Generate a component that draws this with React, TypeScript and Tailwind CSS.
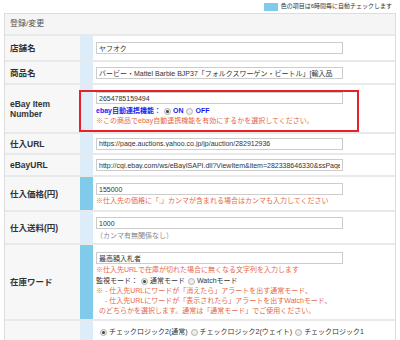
const font = "font-['Liberation_Sans','Noto_Sans_CJK_JP',sans-serif]"

const Field = ({ value }: { value: string }) => (
  <input
    readOnly
    value={value}
    className="block h-[12px] w-[247px] border border-[#cccccc] bg-white px-[2px] text-[7px] leading-[10px] text-[#333] outline-none"
  />
)

const Radio = ({ checked }: { checked?: boolean }) => (
  <span className="mr-[2px] inline-flex h-[7px] w-[7px] shrink-0 items-center justify-center rounded-full border border-[#b0b0b0] bg-[#ececec]">
    {checked && <span className="h-[3px] w-[3px] rounded-full bg-[#444]" />}
  </span>
)

const Row = ({
  label,
  checked,
  h,
  children,
  top,
}: {
  label?: React.ReactNode
  checked?: boolean
  h: string
  children?: React.ReactNode
  top?: boolean
}) => (
  <div className={`relative flex border-b-2 border-[#e9e9e9] ${h}`}>
    <div className="flex w-[75px] shrink-0 items-center bg-[#f7f7f7] pl-[5px] text-[8.5px] font-bold leading-[10px] text-[#333]">
      {label}
    </div>
    <div className={`w-[13px] shrink-0 ${checked ? 'bg-[#80cbea]' : 'bg-[#dcedf9]'}`} />
    <div className={`flex flex-1 flex-col pl-[3px] ${top ? '' : 'justify-center'}`}>{children}</div>
  </div>
)

const Note = ({ children, className = '' }: { children: React.ReactNode; className?: string }) => (
  <div className={`text-[7px] leading-[10px] text-[#e5694c] ${className}`}>{children}</div>
)

export default function App() {
  return (
    <div className={`h-[340px] w-[400px] overflow-hidden bg-white ${font}`}>
      {/* legend */}
      <div className="flex h-[13px] items-center justify-end pr-[8px]">
        <span className="mr-[3px] h-[8px] w-[14px] bg-[#80cbea]" />
        <span className="text-[6px] text-[#333]">色の項目は6時間毎に自動チェックします</span>
      </div>

      <div className="mx-[4px] border border-[#dddddd] border-b-0">
        <div className="flex h-[22px] items-center border-b-2 border-[#e9e9e9] bg-[#f5f5f5] pl-[5px] text-[8px] text-[#555]">
          登録/変更
        </div>

        <Row label="店舗名" h="h-[26px]">
          <Field value="ヤフオク" />
        </Row>

        <Row label="商品名" h="h-[23px]">
          <Field value="バービー・Mattel Barbie BJP37「フォルクスワーゲン・ビートル」[輸入品" />
        </Row>

        <Row label={<span className="pr-[4px]">eBay Item Number</span>} h="h-[49px]" top>
          <div className="pt-[7px]">
            <Field value="2654785159494" />
          </div>
          <div className="mt-[2px] flex items-center text-[7px] leading-[10px] font-bold text-[#1a1af0]">
            <span className="mr-[3px]">ebay自動連携機能：</span>
            <Radio checked />
            <span className="mr-[3px]">ON</span>
            <Radio />
            <span>OFF</span>
          </div>
          <Note>※この商品でebay自動連携機能を有効にするかを選択してください。</Note>
          {/* highlight frame */}
          <div className="pointer-events-none absolute left-[74px] top-[5px] h-[42px] w-[280px] border-2 border-[#e8202a]" />
        </Row>

        <Row label="仕入URL" h="h-[21px]">
          <Field value="https://page.auctions.yahoo.co.jp/jp/auction/282912936" />
        </Row>

        <Row label="eBayURL" h="h-[22px]">
          <Field value="http://cgi.ebay.com/ws/eBayISAPI.dll?ViewItem&item=282338646330&ssPageName=STRK" />
        </Row>

        <Row label="仕入価格(円)" checked h="h-[35px]" top>
          <div className="pt-[6px]">
            <Field value="155000" />
          </div>
          <Note className="mt-[1px]">※仕入先の価格に「,」カンマが含まれる場合はカンマも入力してください</Note>
        </Row>

        <Row label="仕入送料(円)" h="h-[33px]" top>
          <div className="pt-[5px]">
            <Field value="1000" />
          </div>
          <div className="mt-[2px] text-[7px] leading-[10px] text-[#888]">（カンマ有無関係なし）</div>
        </Row>

        <Row label="在庫ワード" checked h="h-[76px]" top>
          <div className="pt-[7px]">
            <Field value="最高額入札者" />
          </div>
          <Note className="mt-[1px]">※仕入先URLで在庫が切れた場合に無くなる文字列を入力します</Note>
          <div className="mt-[1px] flex items-center text-[7px] leading-[10px] text-[#333]">
            <span className="mr-[3px]">監視モード：</span>
            <Radio checked />
            <span className="mr-[3px]">通常モード</span>
            <Radio />
            <span>Watchモード</span>
          </div>
          <Note>※ - 仕入先URLにワードが「消えたら」アラートを出す通常モード、</Note>
          <Note className="pl-[9px]">- 仕入先URLにワードが「表示されたら」アラートを出すWatchモード、</Note>
          <Note className="pl-[3px]">のどちらかを選択します。通常は「通常モード」でご使用ください。</Note>
        </Row>

        <Row h="h-[30px]" top>
          <div className="flex items-center pl-[4px] pt-[6px] text-[7px] leading-[10px] text-[#333]">
            <Radio checked />
            <span className="mr-[3px]">チェックロジック2(通常)</span>
            <Radio />
            <span className="mr-[3px]">チェックロジック2(ウェイト)</span>
            <Radio />
            <span>チェックロジック1</span>
          </div>
        </Row>
      </div>
    </div>
  )
}
